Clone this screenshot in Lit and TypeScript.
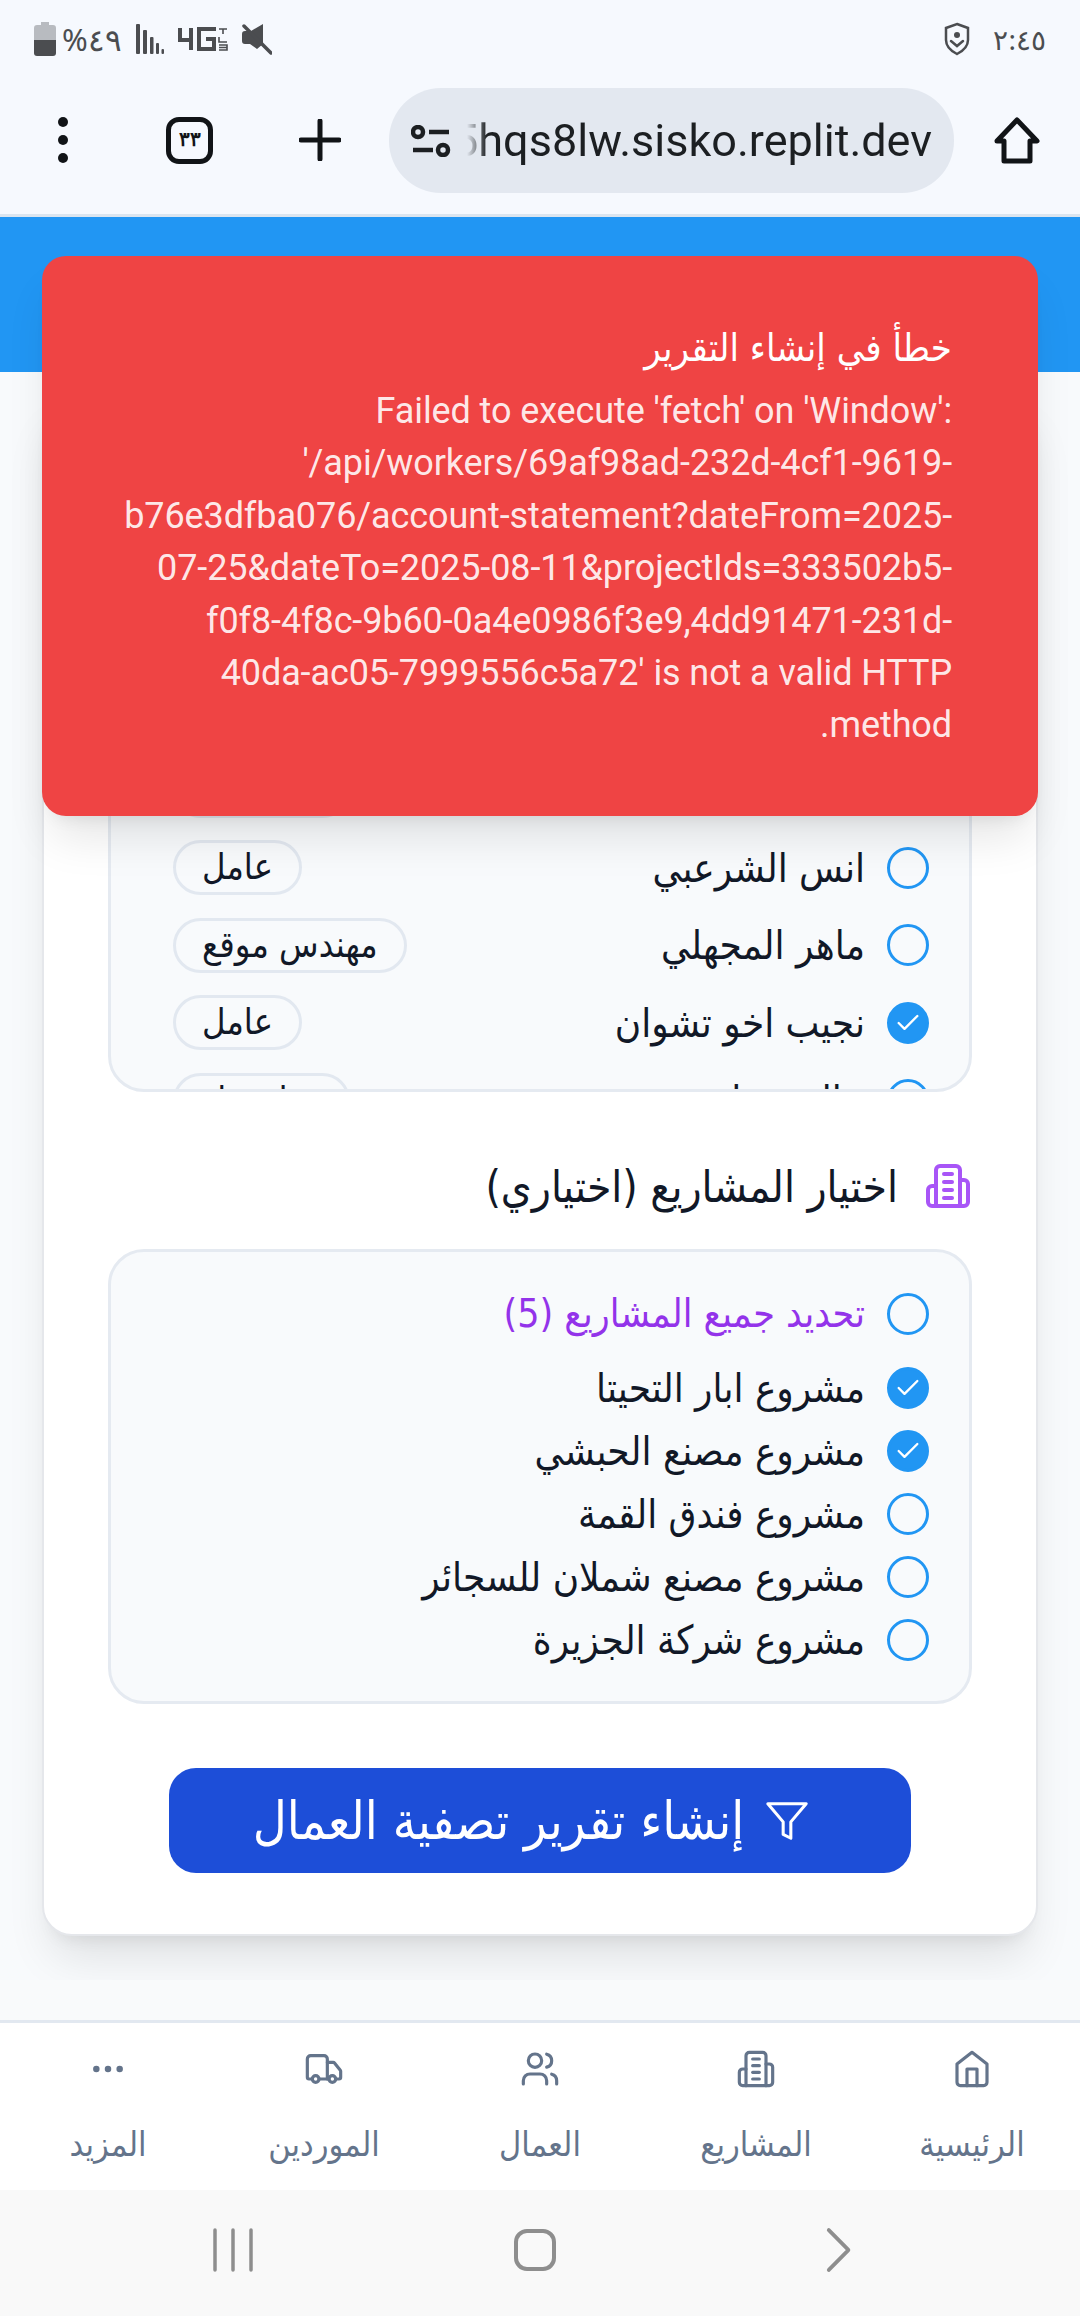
import {LitElement, html, css, svg} from 'lit';
import {customElement} from 'lit/decorators.js';

const icon = (body: unknown, cls: string) => html`<svg class=${cls} viewBox="0 0 24 24" fill="none" stroke="currentColor" stroke-width="2" stroke-linecap="round" stroke-linejoin="round">${body}</svg>`;

const building = svg`<path d="M6 22V4a2 2 0 0 1 2-2h8a2 2 0 0 1 2 2v18Z"/><path d="M6 12H4a2 2 0 0 0-2 2v6a2 2 0 0 0 2 2h2"/><path d="M18 9h2a2 2 0 0 1 2 2v9a2 2 0 0 1-2 2h-2"/><path d="M10 6h4"/><path d="M10 10h4"/><path d="M10 14h4"/><path d="M10 18h4"/>`;
const house = svg`<path d="m3 9 9-7 9 7v11a2 2 0 0 1-2 2H5a2 2 0 0 1-2-2z"/><polyline points="9 22 9 12 15 12 15 22"/>`;
const users = svg`<path d="M16 21v-2a4 4 0 0 0-4-4H6a4 4 0 0 0-4 4v2"/><circle cx="9" cy="7" r="4"/><path d="M22 21v-2a4 4 0 0 0-3-3.87"/><path d="M16 3.13a4 4 0 0 1 0 7.75"/>`;
const truck = svg`<path d="M14 18V6a2 2 0 0 0-2-2H4a2 2 0 0 0-2 2v11a1 1 0 0 0 1 1h2"/><path d="M15 18H9"/><path d="M19 18h2a1 1 0 0 0 1-1v-3.65a1 1 0 0 0-.22-.624l-3.48-4.35A1 1 0 0 0 17.52 8H14"/><circle cx="17" cy="18" r="2"/><circle cx="7" cy="18" r="2"/>`;
const more = svg`<circle cx="12" cy="12" r="1"/><circle cx="19" cy="12" r="1"/><circle cx="5" cy="12" r="1"/>`;
const filter = svg`<polygon points="22 3 2 3 10 12.46 10 19 14 21 14 12.46 22 3"/>`;

const workers = [
  {name: 'تحديد جميع العمال', badge: '', on: false, all: true},
  {name: 'احمد الصنعاني', badge: 'عامل', on: false},
  {name: 'سامي العامري', badge: 'عامل', on: true},
  {name: 'علي الحبيشي', badge: 'معلم بناء', on: false},
  {name: 'انس الشرعبي', badge: 'عامل', on: false},
  {name: 'ماهر المجهلي', badge: 'مهندس موقع', on: false},
  {name: 'نجيب اخو تشوان', badge: 'عامل', on: true},
  {name: 'خالد مقبل', badge: 'معلم بناء', on: false},
];

const projects = [
  {name: 'مشروع ابار التحيتا', on: true},
  {name: 'مشروع مصنع الحبشي', on: true},
  {name: 'مشروع فندق القمة', on: false},
  {name: 'مشروع مصنع شملان للسجائر', on: false},
  {name: 'مشروع شركة الجزيرة', on: false},
];

const tabs = [
  {label: 'الرئيسية', icon: house},
  {label: 'المشاريع', icon: building},
  {label: 'العمال', icon: users},
  {label: 'الموردين', icon: truck},
  {label: 'المزيد', icon: more},
];

@customElement('app-root')
export class AppRoot extends LitElement {
  static styles = css`
    :host {
      display: block;
      width: 1080px;
      height: 2316px;
      overflow: hidden;
      position: relative;
      background: #f8fafc;
      color: #111827;
      font-family: "DejaVu Sans Condensed", "DejaVu Sans", sans-serif;
    }
    .page { display: flex; flex-direction: column; height: 2316px; direction: rtl; }

    .status {
      height: 60px;
      flex: none;
      background: #f6f9fe;
      color: #4b4d50;
      display: flex;
      align-items: center;
      justify-content: space-between;
      padding: 18px 34px 0 34px;
      box-sizing: border-box;
    }
    .status-right, .status-left { display: flex; align-items: center; }
    .status-right { gap: 22px; }
    .status-left { direction: ltr; gap: 14px; }
    .clock { font-family: "Noto Sans", sans-serif; font-size: 28px; line-height: 34px; }
    .pct { font-family: "Noto Sans", sans-serif; font-size: 31px; line-height: 34px; margin-left: -8px; }

    .browser {
      flex: none;
      height: 157px;
      box-sizing: border-box;
      padding: 28px 40px 0 0;
      background: #f6f9fe;
      border-bottom: 3px solid #dbe5ef;
      display: flex;
      align-items: flex-start;
      color: #111417;
    }
    .home-btn { width: 46px; height: 47px; margin: 29px 0 0 40px; }
    .pill {
      width: 565px;
      height: 105px;
      border-radius: 52px;
      background: #e3e8f0;
      display: flex;
      align-items: center;
      box-sizing: border-box;
      padding: 0 22px 0 22px;
      direction: ltr;
      margin-left: 48px;
    }
    .tune { width: 40px; height: 32px; flex: none; }
    .url-wrap {
      overflow: hidden;
      margin-left: 16px;
      flex: 1;
      display: flex;
      justify-content: flex-end;
      -webkit-mask-image: linear-gradient(to right, transparent 0, #000 20px);
      mask-image: linear-gradient(to right, transparent 0, #000 20px);
    }
    .url { font-family: "Roboto", sans-serif; font-size: 45px; line-height: 56px; white-space: nowrap; color: #1c1f22; flex: none; }
    .plus { width: 42px; height: 42px; margin: 31px 0 0 86px; }
    .tabs-count {
      width: 47px;
      height: 47px;
      box-sizing: border-box;
      border: 5px solid #111417;
      border-radius: 13px;
      margin: 29px 0 0 97px;
      font-family: "Noto Sans", sans-serif;
      font-size: 20px;
      line-height: 34px;
      text-align: center;
      font-weight: 600;
    }
    .dots { width: 12px; height: 48px; margin-top: 28px; }

    .hero { flex: none; height: 155px; background: #2196f3; }
    main {
      flex: none;
      height: 1608px;
      box-sizing: border-box;
      overflow: hidden;
      padding: 20px 42px 0;
    }
    .card {
      background: #fff;
      border: 2px solid #e5e7eb;
      border-radius: 30px;
      padding: 31px 64px 61px;
      box-shadow: 0 30px 45px -9px rgba(0,0,0,.1), 0 12px 18px -12px rgba(0,0,0,.1);
    }
    .heading { display: flex; align-items: center; gap: 26px; height: 48px; margin-bottom: 39px; }
    .heading svg { width: 48px; height: 48px; color: #a855f7; flex: none; }
    .heading span { font-size: 44px; white-space: nowrap; }
    .box {
      background: #f8fafc;
      border: 3px solid #e5eaf1;
      border-radius: 36px;
      box-sizing: border-box;
      overflow: hidden;
    }
    .workers {
      height: 580px;
      display: flex;
      flex-direction: column;
      gap: 22.5px;
      padding: 15px 40px 0 62px;
      margin-bottom: 70px;
    }
    .row { display: flex; align-items: center; justify-content: space-between; height: 55px; flex: none; }
    .check { display: flex; align-items: center; gap: 22px; font-size: 40px; line-height: 42px; white-space: nowrap; }
    .all { color: #9333ea; font-size: 39px; }
    .radio {
      width: 42px;
      height: 42px;
      border-radius: 50%;
      border: 3px solid #2196f3;
      box-sizing: border-box;
      flex: none;
      display: block;
    }
    .radio.on { background: #2196f3; color: #fff; padding: 4px; stroke-width: 2; }
    .badge {
      height: 55px;
      box-sizing: border-box;
      border: 3px solid #e2e8f0;
      border-radius: 28px;
      padding: 0 26px;
      font-size: 36px;
      line-height: 47px;
      white-space: nowrap;
    }
    .projects {
      height: 455px;
      padding: 41px 40px 40px 40px;
      display: flex;
      flex-direction: column;
      gap: 21px;
    }
    .projects .all { margin-bottom: 11px; }
    .submit {
      margin: 64px 61px 0;
      height: 105px;
      background: #1d4ed8;
      color: #fff;
      border-radius: 27px;
      display: flex;
      align-items: center;
      justify-content: center;
      gap: 20px;
      font-size: 52px;
      padding-right: 17px;
      white-space: nowrap;
    }
    .submit svg { width: 46px; height: 46px; flex: none; stroke-width: 1.6; }

    .spacer { flex: none; height: 40px; background: #f9fafb; }
    nav {
      flex: none;
      height: 170px;
      box-sizing: border-box;
      background: #fff;
      border-top: 3px solid #e2e8f0;
      display: grid;
      grid-template-columns: repeat(5, 216px);
      color: #64748b;
    }
    .tab { display: flex; flex-direction: column; align-items: center; padding-top: 26px; gap: 34px; }
    .tab svg { width: 40px; height: 40px; stroke-width: 1.9; }
    .tab span { font-size: 34px; line-height: 42px; white-space: nowrap; }
    .sysnav {
      flex: 1;
      background: #f9f9f9;
      display: grid;
      grid-template-columns: repeat(3, 302px);
      direction: ltr;
      padding: 0 0 6px 82px;
      align-items: center;
      justify-items: center;
      color: #8e8e8e;
    }
    .sysnav svg { width: 48px; height: 48px; }

    .toast {
      position: absolute;
      left: 42px;
      top: 256px;
      width: 996px;
      height: 560px;
      box-sizing: border-box;
      border-radius: 24px;
      background: #ef4444;
      color: #fff;
      direction: rtl;
      padding: 66px 86px 0 79px;
      box-shadow: 0 30px 45px -9px rgba(0,0,0,.1), 0 12px 18px -12px rgba(0,0,0,.1);
    }
    .toast h4 { margin: 0 0 11px; font-size: 38px; line-height: 52px; font-weight: 400; }
    .toast p { margin: 0; font-family: "Roboto", sans-serif; font-size: 36px; letter-spacing: -0.1px; line-height: 52.4px; color: rgba(255,255,255,.9); }
  `;

  render() {
    return html`
      <div class="page">
        <div class="status">
          <div class="status-right">
            <span class="clock">٢:٤٥</span>
            <svg width="28" height="34" viewBox="0 0 28 34" fill="none" stroke="#4b4d50" stroke-width="2.5">
              <path d="M14 2 L25 6 V18 C25 25 20 29 14 32 C8 29 3 25 3 18 V6 Z"/>
              <circle cx="14" cy="13" r="3" fill="#4b4d50" stroke="none"/>
              <path d="M8 19 L14 24 L20 19" stroke-linecap="round"/>
            </svg>
          </div>
          <div class="status-left">
            <svg width="22" height="34" viewBox="0 0 22 34">
              <path d="M7 0 H15 V3 H19 Q22 3 22 6 V18 H0 V6 Q0 3 3 3 H7 Z" fill="#b8bbc0"/>
              <path d="M0 18 H22 V31 Q22 34 19 34 H3 Q0 34 0 31 Z" fill="#4b4d50"/>
            </svg>
            <span class="pct">%٤٩</span>
            <svg width="28" height="30" viewBox="0 0 28 30" fill="#4b4d50">
              <rect x="0" y="0" width="4" height="30" rx="1"/>
              <rect x="7" y="6" width="4" height="24" rx="1"/>
              <rect x="14" y="13" width="3.5" height="17" rx="1"/>
              <rect x="20" y="19" width="3" height="11" rx="1"/>
              <rect x="25.5" y="25" width="2.5" height="5" rx="1"/>
            </svg>
            <svg width="50" height="24" viewBox="0 0 50 24" fill="none" stroke="#4b4d50" stroke-width="4">
              <path d="M2 1 V13 H15 M13 1 V23"/>
              <path d="M36 4 V2 H21 V22 H36 V12 H28"/>
              <path d="M41 2 H49 M45 2 V7 M41 10 V15 H49 M41 18 H49 V23 H41 M49 20.5 H41" stroke-width="1.6"/>
            </svg>
            <svg width="30" height="32" viewBox="0 0 30 32" fill="#4b4d50">
              <path d="M21 1 V21 L15 26 L8 21 H3 Q0 21 0 18 V11 Q0 8 3 8 H9 Z"/>
              <path d="M2 3 L29 30" stroke="#4b4d50" stroke-width="3.5" stroke-linecap="round"/>
            </svg>
          </div>
        </div>

        <div class="browser">
          <svg class="home-btn" viewBox="0 0 46 47" fill="none" stroke="currentColor" stroke-width="5" stroke-linejoin="round">
            <path d="M23 3 L43 24 H36 V44 H10 V24 H3 Z"/>
          </svg>
          <div class="pill">
            <svg class="tune" viewBox="0 0 40 32" fill="none" stroke="#1c1f22" stroke-width="4.5">
              <circle cx="7" cy="7" r="5"/>
              <path d="M18 7 H38"/>
              <path d="M2 25 H22"/>
              <circle cx="32" cy="25" r="5"/>
            </svg>
            <div class="url-wrap"><span class="url">5hqs8lw.sisko.replit.dev</span></div>
          </div>
          <svg class="plus" viewBox="0 0 42 42" stroke="currentColor" stroke-width="5" stroke-linecap="round"><path d="M21 2 V40 M2 21 H40"/></svg>
          <div class="tabs-count">٣٣</div>
          <svg class="dots" viewBox="0 0 12 48" fill="currentColor"><circle cx="6" cy="6" r="5"/><circle cx="6" cy="24" r="5"/><circle cx="6" cy="42" r="5"/></svg>
        </div>

        <div class="hero"></div>

        <main>
          <div class="card">
            <div class="heading">${icon(building, '')}<span>اختيار العمال</span></div>
            <div class="box workers">
              ${workers.map(w => html`
                <div class="row">
                  <div class="check ${w.all ? 'all' : ''}">${this.radio(w.on)}<span>${w.name}</span></div>
                  ${w.badge ? html`<span class="badge">${w.badge}</span>` : ''}
                </div>`)}
            </div>

            <div class="heading">${icon(building, '')}<span>اختيار المشاريع (اختياري)</span></div>
            <div class="box projects">
              <div class="check all">${this.radio(false)}<span>تحديد جميع المشاريع (5)</span></div>
              ${projects.map(p => html`<div class="check">${this.radio(p.on)}<span>${p.name}</span></div>`)}
            </div>

            <div class="submit">${icon(filter, '')}<span>إنشاء تقرير تصفية العمال</span></div>
          </div>
        </main>

        <div class="spacer"></div>
        <nav>
          ${tabs.map(t => html`<div class="tab">${icon(t.icon, '')}<span>${t.label}</span></div>`)}
        </nav>

        <div class="sysnav">
          <svg viewBox="0 0 48 48" fill="none" stroke="currentColor" stroke-width="3.5" stroke-linecap="round"><path d="M6 4 V44 M24 4 V44 M42 4 V44"/></svg>
          <svg viewBox="0 0 48 48" fill="none" stroke="currentColor" stroke-width="4"><rect x="5" y="5" width="38" height="38" rx="11"/></svg>
          <svg viewBox="0 0 48 48" fill="none" stroke="currentColor" stroke-width="4" stroke-linecap="round" stroke-linejoin="round"><path d="M13 4 L35 24 L13 44" transform="translate(4 0) scale(.9 1)"/></svg>
        </div>
      </div>

      <div class="toast">
        <h4>خطأ في إنشاء التقرير</h4>
        <p>Failed to execute 'fetch' on 'Window': '/api/workers/69af98ad-232d-4cf1-9619-b76e3dfba076/account-statement?dateFrom=2025-07-25&amp;dateTo=2025-08-11&amp;projectIds=333502b5-f0f8-4f8c-9b60-0a4e0986f3e9,4dd91471-231d-40da-ac05-7999556c5a72' is not a valid HTTP method.</p>
      </div>
    `;
  }

  radio(on: boolean) {
    if (!on) return html`<span class="radio"></span>`;
    return html`<svg class="radio on" viewBox="0 0 24 24" fill="none" stroke="currentColor" stroke-linecap="round" stroke-linejoin="round"><path d="M20 6 9 17l-5-5"/></svg>`;
  }
}
